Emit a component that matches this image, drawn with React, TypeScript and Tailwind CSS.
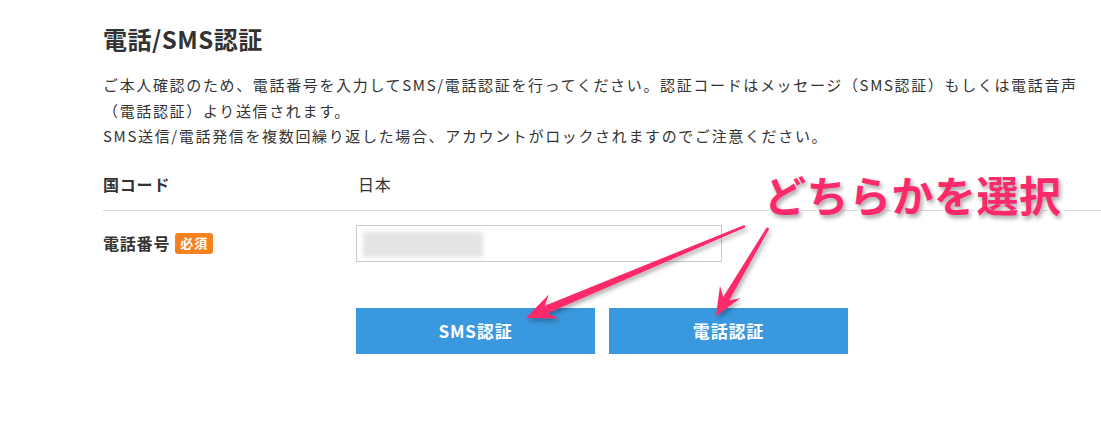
import React from 'react';

function Arrows() {
    return (
        <svg
            className="absolute left-0 top-0 pointer-events-none"
            width={1101}
            height={425}
            viewBox="0 0 1101 425"
        >
            <defs>
                <filter id="arrowShadow" x="-20%" y="-20%" width="140%" height="140%">
                    <feDropShadow dx="2" dy="3" stdDeviation="2" floodColor="#000" floodOpacity="0.3" />
                </filter>
            </defs>
            <g fill="#fd2a6b" filter="url(#arrowShadow)">
                <polygon points="526,318 558.7,318.4 547.8,313.2 745.6,227.3 744.4,224.9 544.8,305.8 548.7,294.4" />
                <polygon points="716,316 740.6,298 729.2,300.6 769.2,228.7 766.8,227.3 723.2,297 720,285.8" />
            </g>
        </svg>
    );
}

export default function App() {
    return (
        <div className="relative w-[1101px] h-[425px] bg-white text-[#333] font-['Noto_Sans_CJK_JP','Noto_Sans',sans-serif] overflow-hidden">
            <div className="pl-[103px] pt-[23px]">
                <h2 className="text-[24px] leading-[32px] font-bold tracking-[0.5px]">電話/SMS認証</h2>
                <p className="mt-[17px] pr-[14px] text-[15px] leading-[25.5px] tracking-[1.65px]">
                    ご本人確認のため、電話番号を入力してSMS/電話認証を行ってください。認証コードはメッセージ（SMS認証）もしくは電話音声（電話認証）より送信されます。
                    <br />
                    SMS送信/電話発信を複数回繰り返した場合、アカウントがロックされますのでご注意ください。
                </p>

                <div className="mt-[9px]">
                    <div className="flex items-center h-[53px] border-b border-[#d9d9d9]">
                        <div className="w-[255px] text-[16px] font-bold tracking-[0.05em]">国コード</div>
                        <div className="text-[16px] tracking-[0.05em]">日本</div>
                    </div>
                    <div className="flex items-center pt-[14px]">
                        <div className="w-[253px] flex items-center gap-[5px]">
                            <span className="text-[16px] font-bold tracking-[0.05em]">電話番号</span>
                            <span className="inline-flex items-center justify-center w-[38px] h-[21px] rounded-[3px] bg-[#f5821f] text-white text-[13px] font-bold tracking-[1px]">必須</span>
                        </div>
                        <div className="w-[366px] h-[37px] border border-[#c8c8c8] bg-white p-[6px]">
                            <div className="w-[120px] h-[25px] bg-[#e4e4e4] blur-[2px]"></div>
                        </div>
                    </div>
                    <div className="flex gap-[14px] pl-[253px] mt-[46px]">
                        <button className="w-[239px] h-[46px] bg-[#3a98de] text-white text-[17px] font-bold tracking-[0.05em]">SMS認証</button>
                        <button className="w-[239px] h-[46px] bg-[#3a98de] text-white text-[17px] font-bold tracking-[0.05em]">電話認証</button>
                    </div>
                </div>
            </div>

            <Arrows />
            <div className="absolute left-[764px] top-[166px] text-[42px] leading-[56px] font-bold tracking-[0.5px] text-[#fd2a6b] [-webkit-text-stroke:5px_white] [paint-order:stroke_fill] [text-shadow:2px_3px_4px_rgba(0,0,0,0.35)]">
                どちらかを選択
            </div>
        </div>
    );
}
